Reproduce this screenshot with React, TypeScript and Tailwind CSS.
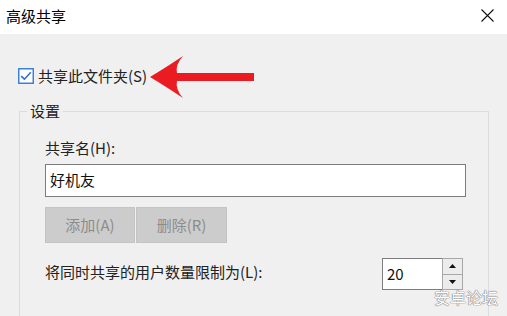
import React from "react";

const font = { fontFamily: '"Noto Sans CJK SC", "Noto Sans", sans-serif' };

export default function App() {
  return (
    <div
      className="relative w-[507px] h-[316px] overflow-hidden bg-[#f0f0f0] text-[#1a1a1a]"
      style={font}
    >
      {/* Title bar */}
      <div className="flex h-[34px] items-center justify-between bg-white pb-[3px] pl-[6px] pr-[13px]">
        <span className="text-[15px] leading-[20px] text-black">高级共享</span>
        <svg width="13" height="13" viewBox="0 0 13 13">
          <path d="M0.5 0.5 L12.5 12.5 M12.5 0.5 L0.5 12.5" stroke="#111" strokeWidth="1.1" />
        </svg>
      </div>

      {/* Checkbox row */}
      <div className="flex h-[20px] items-center mt-[32px] pl-[18px]">
        <svg width="16" height="16" viewBox="0 0 16 16" className="shrink-0">
          <rect x="0.75" y="0.75" width="14.5" height="14.5" fill="white" stroke="#3d82d6" strokeWidth="1.5" />
          <path d="M3.2 8.2 L6.4 11.2 L12.8 4.2" fill="none" stroke="#2d6fcb" strokeWidth="1.6" />
        </svg>
        <span className="ml-[4px] text-[15px] leading-[20px] text-[#222]">共享此文件夹(S)</span>
        <svg width="105" height="43" viewBox="0 0 105 43" className="ml-[3px] mt-[2px] shrink-0">
          <path
            d="M0 21 Q15 12 33 0 Q25 9 27 17 L104 17 L104 25 L27 25 Q25 33 33 42 Q15 30 0 21 Z"
            fill="#ea1c22"
          />
        </svg>
      </div>

      {/* Group box */}
      <fieldset className="ml-[19px] mt-[15px] w-[470px] h-[240px] border border-[#dcdcdc] pl-[25px]">
        <legend className="-ml-[18px] px-[3px] text-[15px] leading-[20px] text-[#222]">设置</legend>
        <div className="mt-[17px] text-[15px] leading-[20px] text-[#222]">共享名(H):</div>
        <div className="mt-[6px] flex h-[33px] w-[421px] items-center border-[1.5px] border-[#7d7d7d] bg-white pl-[4px] text-[15px] text-[#111]">
          好机友
        </div>
        <div className="mt-[10px] flex gap-[1px]">
          <div className="flex h-[36px] w-[90px] items-center justify-center border border-[#c4c4c4] bg-[#cccccc] text-[15px] text-[#8c8c8c]">
            添加(A)
          </div>
          <div className="flex h-[36px] w-[91px] items-center justify-center border border-[#c4c4c4] bg-[#cccccc] text-[15px] text-[#8c8c8c]">
            删除(R)
          </div>
        </div>
        <div className="mt-[15px] flex w-[421px] items-center justify-between">
          <span className="-mt-[5px] text-[15px] leading-[20px] text-[#222]">将同时共享的用户数量限制为(L):</span>
          <div className="mr-[3px] flex h-[32px]">
            <div className="flex w-[60px] items-center border-[1.5px] border-[#7d7d7d] border-r-0 bg-white pl-[4px] text-[15px] text-[#111]">
              20
            </div>
            <div className="flex w-[21px] flex-col border border-[#a8a8a8] bg-white">
              <div className="flex flex-1 items-center justify-center border-b border-[#a8a8a8] bg-[#ececec]">
                <svg width="7" height="4" viewBox="0 0 7 4"><path d="M0 4 L3.5 0 L7 4 Z" fill="#111" /></svg>
              </div>
              <div className="flex flex-1 items-center justify-center bg-[#ececec]">
                <svg width="7" height="4" viewBox="0 0 7 4"><path d="M0 0 L3.5 4 L7 0 Z" fill="#111" /></svg>
              </div>
            </div>
          </div>
        </div>
      </fieldset>

      {/* Watermark */}
      <div className="absolute left-[434px] top-[288px] text-[16px] leading-[18px] text-white [text-shadow:0_0_1px_#555,0_0_1px_#555]">
        安卓论坛
      </div>
    </div>
  );
}
